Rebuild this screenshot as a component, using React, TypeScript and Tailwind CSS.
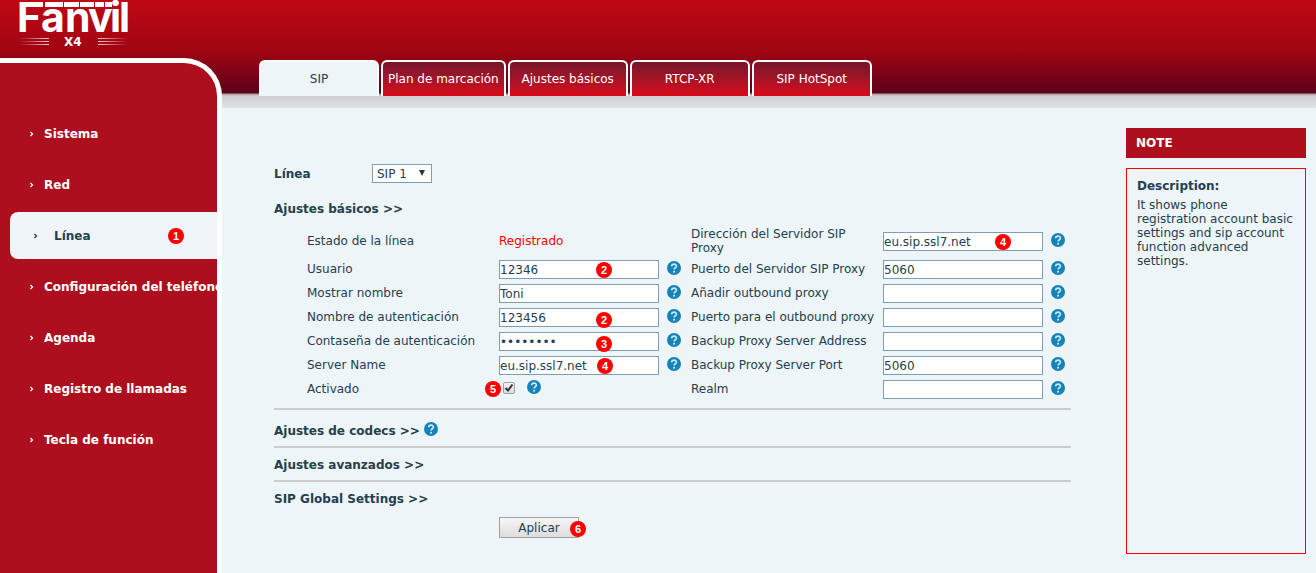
import { useState } from 'react';
import type { ReactNode } from 'react';

interface FieldProps {
	id: string;
	label: string;
	value?: string;
	type?: string;
	children?: ReactNode;
}

const menuItems = [
	'Sistema',
	'Red',
	'Línea',
	'Configuración del teléfono',
	'Agenda',
	'Registro de llamadas',
	'Tecla de función',
];

const tabs = ['SIP', 'Plan de marcación', 'Ajustes básicos', 'RTCP-XR', 'SIP HotSpot'];

const Logo = () => (
	<svg width="112" height="54" viewBox="0 0 112 54" role="img" aria-label="Fanvil X4" className="block">
		<defs>
			<linearGradient id="fadeLeft">
				<stop offset="0" stopColor="#fff" stopOpacity="0" />
				<stop offset="1" stopColor="#fff" stopOpacity="0.8" />
			</linearGradient>
			<linearGradient id="fadeRight">
				<stop offset="0" stopColor="#fff" stopOpacity="0.8" />
				<stop offset="1" stopColor="#fff" stopOpacity="0" />
			</linearGradient>
		</defs>
		<text
			x="-2 22 46 69 91 100"
			y="32"
			fill="#fff"
			className="font-['Inter',sans-serif] text-[41px] font-bold"
		>
			Fanvil
		</text>
		<g fill="#fff">
			<rect x="12" y="2" width="12" height="5" />
			<rect x="26" y="2" width="18" height="5" />
			<rect x="45" y="2" width="15" height="5" />
			<rect x="61" y="2" width="14" height="5" />
			<rect x="76" y="2" width="9" height="5" />
			<rect x="86" y="2" width="7" height="5" />
		</g>
		{[38, 41, 44].map((y) => (
			<g key={y}>
				<rect x="0" y={y} width="30" height="1" fill="url(#fadeLeft)" />
				<rect x="79" y={y} width="30" height="1" fill="url(#fadeRight)" />
			</g>
		))}
		<text x="45" y="46" fill="#fff" className="font-['DejaVu_Sans',sans-serif] text-[12px] font-bold">
			X4
		</text>
	</svg>
);

const Chevron = () => (
	<svg width="4" height="6" viewBox="0 0 4 6" fill="none" stroke="currentColor" className="shrink-0">
		<path d="M0.5 1 L2.5 3 L0.5 5" strokeWidth="1.3" />
	</svg>
);

const Help = () => (
	<button type="button" aria-label="Ayuda" className="mb-1 size-[14px] shrink-0">
		<svg width="14" height="14" viewBox="0 0 14 14" fill="none" className="block">
			<circle cx="7" cy="7" r="7" fill="#1583b8" />
			<path
				d="M4.7 5.3 C4.7 2.4 9.4 2.5 9.4 5.1 C9.4 6.8 7.1 6.7 7.1 8.6"
				stroke="#d3e9f3"
				strokeWidth="1.6"
			/>
			<rect x="6.2" y="9.8" width="1.8" height="1.8" fill="#d3e9f3" />
		</svg>
	</button>
);

const Badge = ({ n, className }: { n: number; className: string }) => (
	<span
		className={`absolute flex size-4 items-center justify-center rounded-full bg-[#ff0000] font-['Liberation_Sans',sans-serif] text-[11px] leading-4 font-bold text-white ${className}`}
	>
		{n}
	</span>
);

const Field = ({ id, label, value = '', type = 'text', children }: FieldProps) => (
	<>
		<label htmlFor={id} className="self-center pr-2">
			{label}
		</label>
		<div className="relative flex items-center gap-2 pt-px">
			<input
				id={id}
				type={type}
				defaultValue={value}
				className="h-[19px] w-[160px] border border-[#7f9db9] bg-white"
			/>
			<Help />
			{children}
		</div>
	</>
);

const Section = ({ title, help = false }: { title: string; help?: boolean }) => (
	<section
		className={
			help
				? 'flex h-[38px] items-center gap-1 border-t-2 border-[#cccccc] pt-1.5'
				: 'flex h-[34px] items-center border-t-2 border-[#cccccc] pt-0.5'
		}
	>
		<button type="button" className="font-bold">
			{title} &gt;&gt;
		</button>
		{help && <Help />}
	</section>
);

const App = () => {
	const [active, setActive] = useState('Línea');
	const [tab, setTab] = useState('SIP');

	return (
		<div className="flex min-h-screen bg-[#edf5f8] bg-[linear-gradient(to_bottom,#c00814_0px,#a00512_50px,#850316_68px,#5c001a_93px,#b09aa2_94px,#cfcdd0_96px,#dfe4e7_108px,#edf5f8_108px)] font-['DejaVu_Sans',sans-serif] text-[12px] leading-[14px] text-[#24404f]">
			<div className="flex w-[222px] shrink-0 flex-col">
				<header className="h-[58px] pl-[19px]">
					<Logo />
				</header>
				<nav className="flex-1 overflow-hidden rounded-tr-[38px] border-t-[5px] border-r-[5px] border-white bg-[#ad0f1f] pt-[45px]">
					<ul>
						{menuItems.map((item) => (
							<li key={item} className="flex h-[51px] items-center">
								<a
									href="#"
									onClick={() => setActive(item)}
									className={
										item === active
											? 'relative ml-[10px] flex h-[47px] flex-1 items-center gap-4 rounded-l-lg bg-[#eff4f9] pl-6 font-bold whitespace-nowrap'
											: 'flex items-center gap-[10px] pl-[30px] font-bold whitespace-nowrap text-white'
									}
								>
									<Chevron />
									{item}
									{item === active && <Badge n={1} className="top-4 left-[158px]" />}
								</a>
							</li>
						))}
					</ul>
				</nav>
			</div>

			<div className="flex min-w-0 flex-1 flex-col">
				<div className="flex h-24 items-end gap-0.5 pl-[37px]" role="tablist">
					{tabs.map((name) => (
						<button
							key={name}
							type="button"
							role="tab"
							aria-selected={name === tab}
							onClick={() => setTab(name)}
							className={
								name === tab
									? 'h-9 min-w-[120px] rounded-t-md border-2 border-b-0 border-white bg-[#edf5f8] px-[5px]'
									: 'h-9 min-w-[120px] rounded-t-md border-2 border-b-0 border-white bg-linear-to-b from-[#75142a] to-[#d90918] px-[5px] text-white'
							}
						>
							{name}
						</button>
					))}
				</div>

				<div className="mt-3 flex flex-1 items-start pr-[10px] pl-[52px]">
					<form className="mr-[55px] min-w-0 flex-1 pt-14" onSubmit={(e) => e.preventDefault()}>
						<div className="flex h-[19px] items-center">
							<label htmlFor="line" className="w-[98px] font-bold">
								Línea
							</label>
							<div className="relative">
								<select
									id="line"
									className="block h-[19px] w-[60px] appearance-none border border-[#7f9db9] bg-white pl-1"
								>
									<option>SIP 1</option>
								</select>
								<svg
									width="6"
									height="6"
									viewBox="0 0 6 6"
									className="pointer-events-none absolute top-[6px] right-[7px]"
								>
									<path d="M0 0 H6 L3 6 Z" fill="#1d3a44" />
								</svg>
							</div>
						</div>

						<button type="button" className="mt-[19px] block font-bold">
							Ajustes básicos &gt;&gt;
						</button>

						<div className="mt-[9px] mb-[7px] grid auto-rows-[24px] grid-cols-[192px_192px_192px_188px] grid-rows-[32px] pl-[33px]">
							<span className="self-center">Estado de la línea</span>
							<span className="self-center text-[#ff0000]">Registrado</span>
							<Field id="proxy" label="Dirección del Servidor SIP Proxy" value="eu.sip.ssl7.net">
								<Badge n={4} className="top-[9px] left-28" />
							</Field>

							<Field id="user" label="Usuario" value="12346">
								<Badge n={2} className="top-[5px] left-[97px]" />
							</Field>
							<Field id="proxyPort" label="Puerto del Servidor SIP Proxy" value="5060" />

							<Field id="display" label="Mostrar nombre" value="Toni" />
							<Field id="outbound" label="Añadir outbound proxy" />

							<Field id="authUser" label="Nombre de autenticación" value="123456">
								<Badge n={2} className="top-[7px] left-[97px]" />
							</Field>
							<Field id="outboundPort" label="Puerto para el outbound proxy" />

							<Field id="authPass" label="Contaseña de autenticación" value="password" type="password">
								<Badge n={3} className="top-[7px] left-[97px]" />
							</Field>
							<Field id="backup" label="Backup Proxy Server Address" />

							<Field id="server" label="Server Name" value="eu.sip.ssl7.net">
								<Badge n={4} className="top-[5px] left-[98px]" />
							</Field>
							<Field id="backupPort" label="Backup Proxy Server Port" value="5060" />

							<label htmlFor="enabled" className="self-center">
								Activado
							</label>
							<div className="relative flex items-center gap-3 pl-1">
								<div className="relative mb-0.5 size-3">
									<input
										id="enabled"
										type="checkbox"
										defaultChecked
										className="peer block size-3 appearance-none rounded-xs border border-[#a0a0a0] bg-linear-to-b from-[#f2f2f2] to-[#dcdcdc]"
									/>
									<svg
										width="10"
										height="10"
										viewBox="0 0 10 10"
										fill="none"
										className="pointer-events-none invisible absolute top-px left-px peer-checked:visible"
									>
										<path d="M1.5 5 L4 7.5 L8.5 1.5" stroke="#333" strokeWidth="2" />
									</svg>
								</div>
								<Help />
								<Badge n={5} className="top-1 -left-[14px]" />
							</div>
							<Field id="realm" label="Realm" />
						</div>

						<Section title="Ajustes de codecs" help />
						<Section title="Ajustes avanzados" />
						<Section title="SIP Global Settings" />

						<div className="mt-[3px] pl-[225px]">
							<div className="relative w-20">
								<button
									type="submit"
									className="block h-[21px] w-full border border-[#a0a0a0] bg-linear-to-b from-[#f6f6f6] to-[#dddddd]"
								>
									Aplicar
								</button>
								<Badge n={6} className="top-1 left-[71px]" />
							</div>
						</div>
					</form>

					<aside className="w-[180px] shrink-0 pt-5">
						<h2 className="flex h-[30px] items-center bg-[#ad0f1f] pl-[10px] font-bold text-white">NOTE</h2>
						<div className="mt-[10px] min-h-[386px] border border-[#ff0000] p-[10px]">
							<h3 className="font-bold">Description:</h3>
							<p className="mt-[5px]">
								It shows phone registration account basic settings and sip account function advanced settings.
							</p>
						</div>
					</aside>
				</div>
			</div>
		</div>
	);
};

export default App;
